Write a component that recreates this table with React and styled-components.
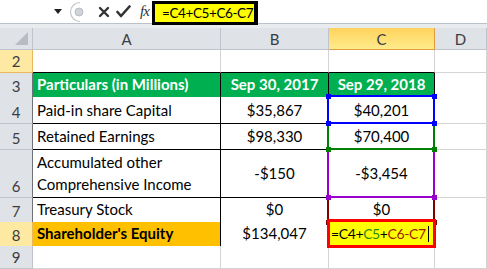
import React from "react";
import styled, { createGlobalStyle } from "styled-components";

const GlobalStyle = createGlobalStyle`
  html, body {
    margin: 0;
    padding: 0;
    background: #fff;
  }
  body {
    font-family: Lato, "Liberation Sans", sans-serif;
  }
`;

const COLS = "33px 188px 108px 106px 1fr";
const GRID = "#d4d4d4";

const Sheet = styled.div`
  width: 487px;
  height: 269px;
  overflow: hidden;
  background: #fff;
`;

/* formula bar */
const FormulaStrip = styled.div`
  height: 24px;
  display: flex;
  background: #fff;
  border-bottom: 1px solid #bcc2c9;
  box-sizing: border-box;
`;

const Band = styled.div`
  height: 4px;
  background: #e9ecef;
`;

const NameBox = styled.div`
  width: 68px;
  display: flex;
  align-items: center;
  justify-content: flex-end;
  padding-right: 6px;
  box-sizing: border-box;
`;

const Tools = styled.div`
  width: 84px;
  display: flex;
  align-items: center;
`;

const Fx = styled.span`
  font-family: "Liberation Serif", serif;
  font-style: italic;
  font-size: 15px;
  color: #333;
  margin-left: 9px;
  letter-spacing: -1px;
`;

const Input = styled.div`
  flex: 1;
  display: flex;
  align-items: flex-start;
`;

const FormulaBox = styled.div`
  position: relative;
  z-index: 6;
  margin-top: 1px;
  height: 24px;
  width: 106px;
  box-sizing: border-box;
  border: 3px solid #000;
  border-right-width: 4px;
  background: #ffff00;
  font-size: 13.5px;
  letter-spacing: -0.4px;
  line-height: 18px;
  padding-left: 7px;
  color: #000;
  white-space: nowrap;
`;

/* grid */
const Row = styled.div`
  display: grid;
  grid-template-columns: ${COLS};
  height: ${(p) => p.$h}px;
`;

const Head = styled.div`
  box-sizing: border-box;
  background: ${(p) => (p.$sel ? "linear-gradient(#ffd35c, #ffeb8c)" : "#dfe2e7")};
  border-right: 1px solid ${(p) => (p.$sel ? "#e39d3f" : "#bfc4ca")};
  border-bottom: 1px solid ${(p) => (p.$sel ? "#e39d3f" : "#bfc4ca")};
  display: flex;
  align-items: center;
  justify-content: center;
  font-size: 15px;
  color: #3a3d42;
`;

const Corner = styled(Head)`
  position: relative;
  &::after {
    content: "";
    position: absolute;
    right: 4px;
    bottom: 4px;
    width: 13px;
    height: 13px;
    background: #b9bdc3;
    clip-path: polygon(100% 0, 100% 100%, 0 100%);
  }
`;

const RowNum = styled.div`
  box-sizing: border-box;
  background: ${(p) => (p.$sel ? "#fde9a2" : "#dfe2e7")};
  border-right: 1px solid ${(p) => (p.$sel ? "#eab85a" : p.$edge ? "#6f7378" : "#bfc4ca")};
  border-bottom: 1px solid ${(p) => (p.$sel ? "#eab85a" : "#bfc4ca")};
  display: flex;
  align-items: flex-end;
  justify-content: center;
  padding-bottom: 2px;
  font-size: 15px;
  color: #3a3d42;
`;

const Cell = styled.div`
  position: relative;
  box-sizing: border-box;
  background: ${(p) => p.$bg || "#fff"};
  border-right: 1px solid ${(p) => (p.$table ? "#000" : GRID)};
  border-bottom: 1px solid ${(p) => (p.$table || p.$top ? "#000" : GRID)};
  display: flex;
  flex-direction: column;
  justify-content: ${(p) => (p.$mid ? "center" : "flex-end")};
  align-items: ${(p) => (p.$left ? "flex-start" : "center")};
  padding: 0 4px 2px 4px;
  font-size: 15px;
  line-height: 22px;
  font-weight: ${(p) => (p.$bold ? 700 : 400)};
  color: ${(p) => p.$color || "#000"};
  white-space: nowrap;
`;

const Range = styled.span`
  position: absolute;
  top: -2px;
  left: -2px;
  right: -1px;
  bottom: -1px;
  border: 2px solid ${(p) => p.$c};
  z-index: ${(p) => p.$z};
  pointer-events: none;
`;

const Handle = styled.i`
  position: absolute;
  width: 5px;
  height: 5px;
  background: ${(p) => p.$c};
  ${(p) => (p.$top ? "top: -3.5px;" : "bottom: -3.5px;")}
  ${(p) => (p.$right ? "right: -3.5px;" : "left: -3.5px;")}
`;

const Active = styled.div`
  position: absolute;
  top: -3px;
  left: -2px;
  right: -2px;
  bottom: -2px;
  z-index: 5;
  border: 3px solid #ff0000;
  background: #ffff00;
  display: flex;
  align-items: center;
  padding-left: 1px;
  font-size: 14px;
  letter-spacing: -0.4px;
  color: #000;
  white-space: nowrap;
`;

const Ref = styled.span`
  color: ${(p) => p.$c};
`;

const Caret = styled.span`
  display: inline-block;
  width: 1px;
  height: 16px;
  background: #000;
  margin-left: 2px;
`;

function RangeMark({ c, z }) {
  return (
    <Range $c={c} $z={z}>
      <Handle $c={c} $top />
      <Handle $c={c} $top $right />
      <Handle $c={c} />
      <Handle $c={c} $right />
    </Range>
  );
}

function FormulaText() {
  return (
    <>
      =C4+<Ref $c="#1f8a1f">C5</Ref>+<Ref $c="#9b1c00">C6-C7</Ref>
    </>
  );
}

function DataRow({ n, h, a, b, c, range, mid }) {
  return (
    <Row $h={h}>
      <RowNum $edge>{n}</RowNum>
      <Cell $table $left>
        {a}
      </Cell>
      <Cell $table $mid={mid}>{b}</Cell>
      <Cell $table $mid={mid}>
        {c}
        {range && <RangeMark c={range.c} z={range.z} />}
      </Cell>
      <Cell />
    </Row>
  );
}

export default function App() {
  return (
    <Sheet>
      <GlobalStyle />
      <FormulaStrip>
        <NameBox>
          <svg width="8" height="5" viewBox="0 0 8 5">
            <path d="M0 0h8L4 5z" fill="#222" />
          </svg>
        </NameBox>
        <Tools>
          <svg width="22" height="22" viewBox="0 0 22 22">
            <path d="M12 1.5a9.5 9.5 0 1 0 0 19" fill="none" stroke="#c4c8cd" strokeWidth="1.2" />
            <circle cx="11" cy="11" r="4" fill="#d0d3d7" stroke="#b0b4b9" strokeWidth="0.8" />
          </svg>
          <svg width="12" height="12" viewBox="0 0 12 12" style={{ marginLeft: 8 }}>
            <path d="M2 2l8 8M10 2l-8 8" stroke="#333" strokeWidth="2.4" strokeLinecap="round" />
          </svg>
          <svg width="15" height="13" viewBox="0 0 15 13" style={{ marginLeft: 6 }}>
            <path d="M1.5 7l3.5 4L13.5 1.5" fill="none" stroke="#333" strokeWidth="2.6" strokeLinejoin="round" strokeLinecap="round" />
          </svg>
          <Fx>fx</Fx>
        </Tools>
        <Input>
          <FormulaBox>=C4+C5+C6-C7</FormulaBox>
        </Input>
      </FormulaStrip>
      <Band />

      <Row $h={22}>
        <Corner />
        <Head>A</Head>
        <Head>B</Head>
        <Head $sel>C</Head>
        <Head>D</Head>
      </Row>

      <Row $h={23}>
        <RowNum $sel>2</RowNum>
        <Cell $top />
        <Cell $top />
        <Cell $top />
        <Cell />
      </Row>

      <Row $h={24}>
        <RowNum $edge>3</RowNum>
        <Cell $table $left $bg="#00b050" $color="#fff" $bold>
          Particulars (in Millions)
        </Cell>
        <Cell $table $bg="#00b050" $color="#fff" $bold>
          Sep 30, 2017
        </Cell>
        <Cell $table $bg="#00b050" $color="#fff" $bold>
          Sep 29, 2018
        </Cell>
        <Cell />
      </Row>

      <DataRow n={4} h={27} a="Paid-in share Capital" b="$35,867" c="$40,201" range={{ c: "#0000ff", z: 4 }} />
      <DataRow n={5} h={26} a="Retained Earnings" b="$98,330" c="$70,400" range={{ c: "#008000", z: 3 }} />
      <DataRow
        n={6}
        h={48}
        mid
        a={
          <>
            <span>Accumulated other</span>
            <span>Comprehensive Income</span>
          </>
        }
        b="-$150"
        c="-$3,454"
        range={{ c: "#9900cc", z: 2 }}
      />
      <DataRow n={7} h={24} a="Treasury Stock" b="$0" c="$0" range={{ c: "#800000", z: 1 }} />

      <Row $h={24}>
        <RowNum $sel>8</RowNum>
        <Cell $table $left $bg="#ffc000" $bold>
          Shareholder's Equity
        </Cell>
        <Cell $table>$134,047</Cell>
        <Cell $table>
          <Active>
            <FormulaText />
            <Caret />
          </Active>
        </Cell>
        <Cell />
      </Row>

      <Row $h={23}>
        <RowNum>9</RowNum>
        <Cell />
        <Cell />
        <Cell />
        <Cell />
      </Row>
    </Sheet>
  );
}
